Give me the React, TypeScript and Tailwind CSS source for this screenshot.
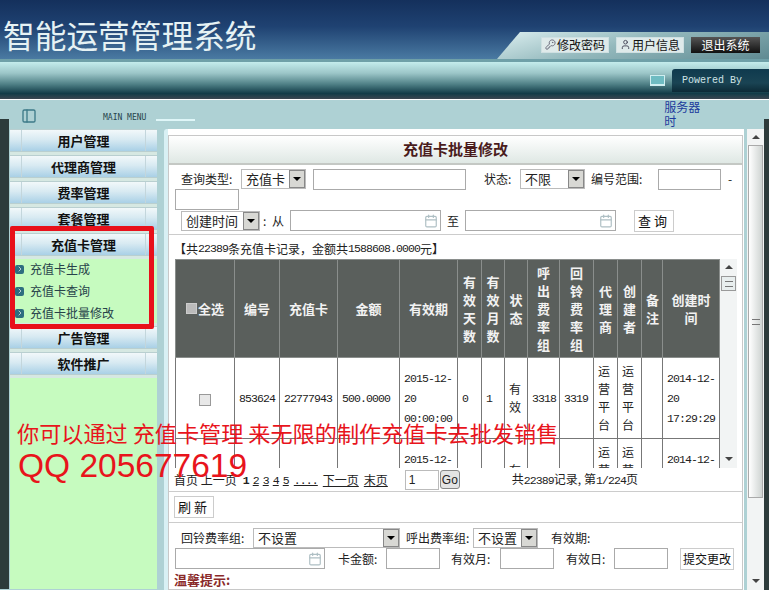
import { Calendar, ChevronRight, KeyRound, PanelLeft, User } from "lucide-react"

const menuTop = ["用户管理", "代理商管理", "费率管理", "套餐管理", "充值卡管理"]
const menuBottom = ["广告管理", "软件推广"]
const subMenu = ["充值卡生成", "充值卡查询", "充值卡批量修改"]

const colWidths = [59, 45, 58, 62, 58, 24, 23, 23, 32, 34, 24, 24, 21, 57]
const headers = ["编号", "充值卡", "金额", "有效期", "有效天数", "有效月数", "状态", "呼出费率组", "回铃费率组", "代理商", "创建者", "备注", "创建时间"]

function Num({ children }: { children: React.ReactNode }) {
  return <span className="font-['Liberation_Mono',monospace] text-[11.5px] tracking-[-0.9px]">{children}</span>
}

function MenuItem({ label }: { label: string }) {
  return (
    <div className="flex h-[23px] w-[147px] border-y border-[#b9cfd0] bg-[linear-gradient(#f2f8fa,#d8eaf2_45%,#a9d0e6)] px-[11px]">
      <div className="flex flex-1 items-center justify-center border-x border-[#c3d6dc] text-[13px] font-bold text-[#111]">
        {label}
      </div>
    </div>
  )
}

function Select({ label, width, className = "" }: { label: string; width: string; className?: string }) {
  return (
    <div className={`flex h-[20px] shrink-0 items-center justify-between border border-[#bbb] bg-white pl-[4px] text-[13px] text-[#222] ${width} ${className}`}>
      <span className="whitespace-nowrap">{label}</span>
      <span className="flex h-[18px] w-[16px] items-center justify-center border border-[#888] bg-[#d8d8d4]">
        <span className="h-0 w-0 border-x-[4px] border-t-[4px] border-x-transparent border-t-black" />
      </span>
    </div>
  )
}

function Field({ width, calendar = false, className = "" }: { width: string; calendar?: boolean; className?: string }) {
  return (
    <div className={`flex h-[21px] shrink-0 items-center justify-end border border-[#aaa] bg-white pr-[2px] ${width} ${className}`}>
      {calendar ? <Calendar size={14} className="text-[#aebfc4]" /> : null}
    </div>
  )
}

function Btn({ children, className = "" }: { children: React.ReactNode; className?: string }) {
  return (
    <div className={`flex shrink-0 items-center justify-center border border-[#ccc] bg-white text-[#111] ${className}`}>
      {children}
    </div>
  )
}

function DateCell({ a, b, c }: { a: string; b: string; c: string }) {
  return (
    <div className="leading-[18px]">
      <Num>{a}</Num>
      <br />
      <Num>{b}</Num>
      <br />
      <Num>{c}</Num>
    </div>
  )
}

function DataRow({ height }: { height: string }) {
  const cell = "border border-[#777] px-[4px] text-left align-middle"
  return (
    <tr className={height}>
      <td className="border border-[#777] text-center align-middle">
        <span className="inline-block h-[12px] w-[12px] border border-[#999] bg-[#e8e8e8] align-middle" />
      </td>
      <td className={cell}><Num>853624</Num></td>
      <td className={cell}><Num>22777943</Num></td>
      <td className={cell}><Num>500.0000</Num></td>
      <td className={cell}><DateCell a="2015-12-" b="20" c="00:00:00" /></td>
      <td className={cell}><Num>0</Num></td>
      <td className={cell}><Num>1</Num></td>
      <td className={`${cell} leading-[18px]`}>有效</td>
      <td className={cell}><Num>3318</Num></td>
      <td className={cell}><Num>3319</Num></td>
      <td className={`${cell} leading-[18px]`}>运营平台</td>
      <td className={`${cell} leading-[18px]`}>运营平台</td>
      <td className={cell} />
      <td className={cell}><DateCell a="2014-12-" b="20" c="17:29:29" /></td>
    </tr>
  )
}

export default function App() {
  return (
    <div className="relative h-[598px] w-[769px] overflow-hidden bg-white font-['Noto_Sans_CJK_SC',sans-serif] text-[12px] text-[#222]">
      <header>
        <div className="flex h-[59px] items-end justify-between bg-[linear-gradient(#14305c,#1f4272_45%,#4a7aa2)]">
          <h1 className="mb-[5px] ml-[3px] text-[31.7px] leading-[40px] font-normal text-[#e6f2f4]">智能运营管理系统</h1>
          <div className="flex h-[27px] w-[272px] items-center gap-[7px] bg-[linear-gradient(165deg,#dceff0,#94b9bd_45%,#5f8a92)] pr-[9px] pb-[2px] pl-[44px] [clip-path:polygon(23px_0,100%_0,100%_100%,0_100%)]">
            <div className="flex h-[16px] w-[68px] items-center justify-end gap-[1px] border border-[#cfe0e2] bg-[#dfeaea] pr-[3px] text-[#111]">
              <KeyRound size={11} className="text-[#667]" />
              修改密码
            </div>
            <div className="flex h-[16px] w-[68px] items-center justify-end gap-[1px] border border-[#cfe0e2] bg-[#dfeaea] pr-[3px] text-[#111]">
              <User size={11} className="text-[#445]" />
              用户信息
            </div>
            <div className="flex h-[16px] w-[69px] items-center justify-center bg-[linear-gradient(#555,#111)] text-white">退出系统</div>
          </div>
        </div>
        <div className="flex h-[40px] items-center justify-end border-t-[3px] border-[#6fa0a8] bg-[linear-gradient(#c4ecec,#9cc6c8_30%,#4f8086_60%,#123c48_85%,#3a4650)]">
          <div className="mr-[7px] h-[11px] w-[15px] border border-[#cfeef0] border-b-2 bg-[#6fbcc2]" />
          <div className="flex h-[23px] w-[97px] items-center rounded-tl-[3px] bg-[linear-gradient(#0f3a4e,#1a4454_60%,#0c2a36)] pl-[10px] font-['Liberation_Mono',monospace] text-[10px] text-[#cfe3e6]">
            Powered By
          </div>
        </div>
        <div className="h-px bg-white" />
      </header>

      <div className="bg-[#aed1d4]">
        <div className="flex h-[29px] items-start">
          <PanelLeft size={16} className="mt-[8px] ml-[21px] text-[#3d7a88]" />
          <span className="mt-[14px] ml-[66px] font-['DejaVu_Sans_Mono',monospace] text-[8px] leading-[8px] text-[#25444a]">MAIN MENU</span>
          <span className="mt-[19px] ml-[10px] h-[2px] w-[39px] bg-[#dff6f8]" />
          <div className="ml-[469px] h-[30px] w-[36px] overflow-hidden leading-[14px] text-[#1c3a9c]">
            服务器
            <br />
            时
            <br />
            间
          </div>
        </div>

        <div className="flex h-[461px] items-start">
          <div className="-mt-[10px] h-[470px] w-[9px] bg-[#2d3b3b]" />
          <aside className="ml-px flex h-[460px] w-[147px] flex-col bg-[#c6fbbf]">
            <div className="flex flex-col gap-[3px] bg-[#d6e8e2] pb-[3px]">
              {menuTop.map((m) => (
                <MenuItem key={m} label={m} />
              ))}
            </div>
            <div className="flex flex-col gap-[2px] pl-[5px]">
              {subMenu.map((s) => (
                <div key={s} className="flex h-[20px] items-center gap-[6px] text-[#26424a]">
                  <span className="flex h-[9px] w-[9px] items-center justify-center rounded-[2px] bg-[#2e6e80]">
                    <ChevronRight size={8} className="text-white" />
                  </span>
                  {s}
                </div>
              ))}
            </div>
            <div className="flex flex-col gap-[3px] bg-[#d6e8e2] pt-[3px] pb-[3px]">
              {menuBottom.map((m) => (
                <MenuItem key={m} label={m} />
              ))}
            </div>
          </aside>

          <main className="ml-[7px] flex h-[461px] w-[580px] flex-col rounded-tl-[3px] border-l-4 border-[#d8f0f4] bg-white pt-[6px]">
            <div className="flex h-[455px] w-[575px] flex-col border border-[#c8c8c8] bg-white">
              <div className="flex h-[29px] shrink-0 items-center justify-center border-b-2 border-[#c4c8c4] bg-[linear-gradient(#fff,#dfe8e4)] text-[15px] font-bold text-[#4a1c1c]">
                充值卡批量修改
              </div>

              <section className="flex h-[70px] shrink-0 flex-col border-b border-[#ccc]">
                <div className="mt-[4px] flex h-[20px] items-center">
                  <span className="ml-[12px] w-[60px]">查询类型:</span>
                  <Select label="充值卡" width="w-[65px]" />
                  <Field width="w-[153px]" className="ml-[7px]" />
                  <span className="ml-[18px] w-[36px]">状态:</span>
                  <Select label="不限" width="w-[65px]" />
                  <span className="ml-[6px] w-[67px]">编号范围:</span>
                  <Field width="w-[63px]" />
                  <span className="ml-[7px]">-</span>
                </div>
                <Field width="w-[64px]" className="ml-[6px]" />
                <div className="flex h-[21px] items-center">
                  <Select label="创建时间" width="w-[79px]" className="ml-[12px]" />
                  <span className="ml-[3px] w-[9px]">:</span>
                  <span className="w-[18px]">从</span>
                  <Field width="w-[151px]" calendar />
                  <span className="w-[24px] text-center">至</span>
                  <Field width="w-[151px]" calendar />
                  <Btn className="ml-[18px] h-[22px] w-[40px] text-[13px] tracking-[3px]">查询</Btn>
                </div>
              </section>

              <div className="flex h-[24px] shrink-0 items-center pt-[3px] pl-[5px]">
                【共<Num>22389</Num>条充值卡记录{"\uFF0C"}金额共<Num>1588608.0000</Num>元】
              </div>

              <div className="flex h-[209px] shrink-0 overflow-hidden pl-[6px]">
                <table className="h-fit w-[544px] shrink-0 table-fixed border-collapse">
                  <colgroup>
                    {colWidths.map((w, i) => (
                      <col key={i} style={{ width: w }} />
                    ))}
                  </colgroup>
                  <thead>
                    <tr className="h-[98px] bg-[#5a5f5c] text-[13px] leading-[18px] font-bold text-[#f2f2f2]">
                      <th className="border border-[#8a8e8c] font-bold whitespace-nowrap">
                        <span className="mr-[1px] inline-block h-[11px] w-[11px] border border-[#ccc] bg-[#bbb]" />
                        全选
                      </th>
                      {headers.map((h) => (
                        <th key={h} className={`border border-[#8a8e8c] font-bold ${h.length === 5 ? "px-[6px]" : "px-[4px]"}`}>{h}</th>
                      ))}
                    </tr>
                  </thead>
                  <tbody>
                    <DataRow height="h-[81px]" />
                    <DataRow height="h-[81px]" />
                  </tbody>
                </table>
                <div className="flex h-[209px] w-[17px] shrink-0 flex-col items-center bg-[#f2f4f4] text-[#555]">
                  <span className="mt-[6px] h-0 w-0 border-x-[4px] border-b-[4px] border-x-transparent border-b-[#444]" />
                  <span className="mt-[7px] flex h-[15px] w-[15px] items-center justify-center border border-[#999] bg-[#e8eeee]">
                    <span className="h-[6px] w-[8px] border-y border-[#777]" />
                  </span>
                  <span className="mt-auto mb-[7px] h-0 w-0 border-x-[4px] border-t-[4px] border-x-transparent border-t-[#444]" />
                </div>
              </div>

              <div className="flex h-[24px] shrink-0 items-center border-b border-[#ccc] pl-[5px]">
                <span>首页 上一页</span>
                <span className="ml-[6px] font-bold"><Num>1</Num></span>
                <span className="ml-[4px] underline"><Num>2</Num></span>
                <span className="ml-[4px] underline"><Num>3</Num></span>
                <span className="ml-[4px] underline"><Num>4</Num></span>
                <span className="ml-[4px] underline"><Num>5</Num></span>
                <span className="ml-[5px] underline"><Num>....</Num></span>
                <span className="ml-[5px] underline">下一页</span>
                <span className="ml-[5px] underline">末页</span>
                <div className="ml-[17px] flex h-[20px] w-[34px] items-center border border-[#bbb] pl-[3px] font-['Liberation_Sans',sans-serif]">1</div>
                <div className="ml-px flex h-[19px] w-[20px] items-center justify-center rounded-[3px] border border-[#888] bg-[#e4e4e4] font-['Liberation_Sans',sans-serif]">Go</div>
                <span className="ml-[52px] whitespace-pre">共<Num>22389</Num>记录, 第<Num>1/224</Num>页</span>
              </div>

              <div className="flex h-[31px] shrink-0 items-center border-b border-[#ccc] pl-[5px]">
                <Btn className="h-[22px] w-[40px] text-[13px] tracking-[3px]">刷新</Btn>
              </div>

              <div className="mt-[5px] flex h-[20px] shrink-0 items-center">
                <span className="ml-[12px] w-[72px]">回铃费率组:</span>
                <Select label="不设置" width="w-[147px]" />
                <span className="ml-[6px] w-[67px]">呼出费率组:</span>
                <Select label="不设置" width="w-[65px]" />
                <span className="ml-[13px]">有效期:</span>
              </div>
              <div className="flex h-[21px] shrink-0 items-center">
                <Field width="w-[150px]" calendar className="ml-[6px]" />
                <span className="ml-[13px] w-[48px]">卡金额:</span>
                <Field width="w-[54px]" />
                <span className="ml-[11px] w-[49px]">有效月:</span>
                <Field width="w-[54px]" />
                <span className="ml-[12px] w-[48px]">有效日:</span>
                <Field width="w-[54px]" />
                <Btn className="ml-[12px] h-[22px] w-[54px]">提交更改</Btn>
              </div>
              <div className="mt-[1px] pl-[5px] text-[13px] font-bold text-[#8a2a2a]">温馨提示:</div>
            </div>
          </main>

          <div className="ml-[3px] flex h-[461px] w-[17px] shrink-0 flex-col items-center bg-[#f2f4f4]">
            <span className="mt-[6px] h-0 w-0 border-x-[4px] border-b-[4px] border-x-transparent border-b-[#444]" />
            <div className="mt-[6px] flex h-[353px] w-[15px] items-center justify-center border border-[#aaa] bg-[linear-gradient(90deg,#fff,#cfd4d2)]">
              <span className="h-[6px] w-[8px] border-y border-[#777]" />
            </div>
            <span className="mt-auto mb-[7px] h-0 w-0 border-x-[4px] border-t-[4px] border-x-transparent border-t-[#444]" />
          </div>
          <div className="-mt-[10px] h-[471px] flex-1 bg-[#2d3b3b]" />
        </div>
      </div>

      <div className="absolute top-[226px] left-[10px] h-[103px] w-[144px] rounded-[2px] border-[5px] border-[#e8101a]" />
      <div className="absolute top-[416px] left-[17px] text-[22.15px] leading-[32px] whitespace-nowrap text-[#e8141c]">
        你可以通过 充值卡管理 来无限的制作充值卡去批发销售
      </div>
      <div className="absolute top-[447px] left-[18px] font-['Liberation_Sans',sans-serif] text-[33.5px] leading-[38px] whitespace-nowrap text-[#e8141c]">
        QQ 205677619
      </div>
    </div>
  )
}
